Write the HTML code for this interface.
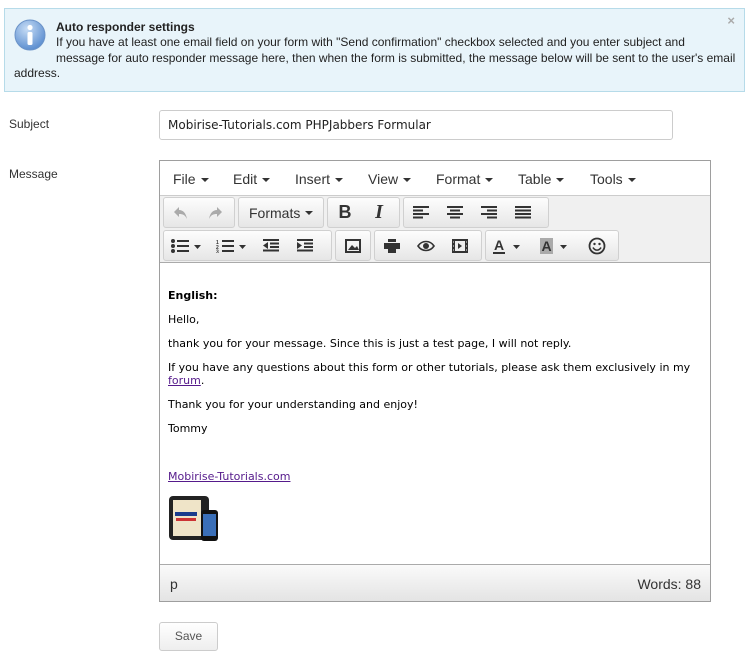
<!DOCTYPE html>
<html><head><meta charset="utf-8"><style>
*{box-sizing:border-box;margin:0;padding:0}
body{width:750px;height:655px;background:#fff;font-family:"Liberation Sans",Arial,sans-serif;color:#333;position:relative;overflow:hidden}
.info{position:absolute;left:4px;top:8px;width:741px;height:84px;background:#e8f4fa;border:1px solid #b6dbe9;font-size:12px;color:#222;line-height:15.5px}
.info .t{position:absolute;left:51px;top:11px;font-weight:bold}
.info .b{position:absolute;left:9px;top:26px;right:2px;white-space:nowrap}
.x{position:absolute;right:9px;top:4px;color:#aaa;font-size:13px;font-weight:bold}
.lbl{position:absolute;left:9px;font-size:12px;color:#333}
.inp{position:absolute;left:159px;top:110px;width:514px;height:30px;border:1px solid #ccc;border-radius:3px;font-family:"DejaVu Sans",sans-serif;font-size:12px;padding:7px 8px;color:#222}
.ed{position:absolute;left:159px;top:160px;width:552px;height:442px;border:1px solid #9e9e9e}
.menu{height:35px;background:#fff;border-bottom:1px solid #ccc;font-size:14px;color:#333}
.menu span{position:absolute;top:10px}
.car{display:inline-block;width:0;height:0;border-left:4px solid transparent;border-right:4px solid transparent;border-top:4px solid #333;vertical-align:middle;margin-left:5px}
.tb{position:absolute;left:0;width:550px;height:33px;background:#f0f0f0}
.g{position:absolute;top:1px;height:31px;border:1px solid #d0d0d0;border-radius:3px;background:linear-gradient(#fdfdfd,#e6e6e6);display:flex;align-items:center}
.ico{width:34px;height:29px;display:flex;align-items:center;justify-content:center;font-size:16px;color:#333;font-weight:bold}
.ct{position:absolute;left:0;top:101px;width:550px;height:302px;background:#fff;border-top:1px solid #aaa;font-family:"DejaVu Sans",Verdana,sans-serif;font-size:11px;color:#000;padding:26px 8px 0;line-height:13px}
.ct p{margin-bottom:11px}
.ct a{color:#551a8b;text-decoration:underline}
.st{position:absolute;left:0;top:403px;width:550px;height:37px;border-top:1px solid #aaa;background:linear-gradient(#fafafa,#e4e4e4);font-size:14px;color:#333}
.save{position:absolute;left:159px;top:622px;width:59px;height:29px;border:1px solid #ccc;border-radius:3px;background:linear-gradient(#fff,#eee);font-size:12px;color:#555;text-align:center;line-height:27px}
</style></head><body>
<div class="info">
<svg style="position:absolute;left:9px;top:10px" width="32" height="32" viewBox="0 0 32 32"><defs><radialGradient id="r" cx="40%" cy="30%" r="70%"><stop offset="0" stop-color="#c6dcf5"/><stop offset="1" stop-color="#5d8fd0"/></radialGradient></defs><circle cx="16" cy="16" r="15" fill="url(#r)" stroke="#6b93c8"/><circle cx="16" cy="8.5" r="2.6" fill="#fff"/><rect x="13.5" y="13" width="5" height="13" rx="1.5" fill="#fff"/></svg>
<div class="t">Auto responder settings</div>
<div class="b"><span style="padding-left:42px">If you have at least one email field on your form with "Send confirmation" checkbox selected and you enter subject and</span><br><span style="padding-left:42px">message for auto responder message here, then when the form is submitted, the message below will be sent to the user's email</span><br>address.</div>
<div class="x">×</div>
</div>
<div class="lbl" style="top:117px">Subject</div>
<div class="inp">Mobirise-Tutorials.com PHPJabbers Formular</div>
<div class="lbl" style="top:167px">Message</div>
<div class="ed">
<div class="menu">
<span style="left:13px">File<i class="car"></i></span>
<span style="left:73px">Edit<i class="car"></i></span>
<span style="left:135px">Insert<i class="car"></i></span>
<span style="left:208px">View<i class="car"></i></span>
<span style="left:276px">Format<i class="car"></i></span>
<span style="left:358px">Table<i class="car"></i></span>
<span style="left:430px">Tools<i class="car"></i></span>
</div>
<div class="tb" style="top:35px">
<div class="g" style="left:3px;width:72px">
<div class="ico"><svg width="16" height="14"><path d="M6 1 L1 6 L6 11 V8 C10 8 12 9 14 13 C13 7 10 4 6 4Z" fill="#aaa"/></svg></div>
<div class="ico"><svg width="16" height="14"><path d="M10 1 L15 6 L10 11 V8 C6 8 4 9 2 13 C3 7 6 4 10 4Z" fill="#aaa"/></svg></div></div>
<div class="g" style="left:78px;width:86px;font-size:14px;padding-left:10px">Formats<i class="car"></i></div>
<div class="g" style="left:167px;width:73px"><div class="ico" style="font-size:18px">B</div><div class="ico" style="font-style:italic;font-family:'Liberation Serif',serif;font-size:20px">I</div></div>
<div class="g" style="left:243px;width:146px">
<div class="ico"><svg width="16" height="14"><path d="M0 1h16M0 4.5h10M0 8h16M0 11.5h10" stroke="#333" stroke-width="2"/></svg></div>
<div class="ico"><svg width="16" height="14"><path d="M0 1h16M3 4.5h10M0 8h16M3 11.5h10" stroke="#333" stroke-width="2"/></svg></div>
<div class="ico"><svg width="16" height="14"><path d="M0 1h16M6 4.5h10M0 8h16M6 11.5h10" stroke="#333" stroke-width="2"/></svg></div>
<div class="ico"><svg width="16" height="14"><path d="M0 1h16M0 4.5h16M0 8h16M0 11.5h16" stroke="#333" stroke-width="2"/></svg></div></div>
</div>
<div class="tb" style="top:68px">
<div class="g" style="left:3px;width:169px">
<div class="ico" style="width:44px"><svg width="30" height="14"><circle cx="2" cy="2" r="2" fill="#333"/><circle cx="2" cy="7" r="2" fill="#333"/><circle cx="2" cy="12" r="2" fill="#333"/><path d="M6 2h12M6 7h12M6 12h12" stroke="#333" stroke-width="2"/><path d="M23 6h7l-3.5 4z" fill="#333"/></svg></div>
<div class="ico" style="width:46px"><svg width="30" height="14"><text x="0" y="5" font-size="5" fill="#333">1</text><text x="0" y="10" font-size="5" fill="#333">2</text><text x="0" y="14.5" font-size="5" fill="#333">3</text><path d="M6 2h12M6 7h12M6 12h12" stroke="#333" stroke-width="2"/><path d="M23 6h7l-3.5 4z" fill="#333"/></svg></div>
<div class="ico"><svg width="16" height="14"><path d="M0 1h16M7 4.5h9M7 8h9M0 11.5h16" stroke="#333" stroke-width="2"/><path d="M5 3v7L0 6.5z" fill="#333"/></svg></div>
<div class="ico"><svg width="16" height="14"><path d="M0 1h16M7 4.5h9M7 8h9M0 11.5h16" stroke="#333" stroke-width="2"/><path d="M0 3v7L5 6.5z" fill="#333"/></svg></div></div>
<div class="g" style="left:175px;width:36px"><div class="ico"><svg width="16" height="14"><rect x="1" y="1" width="14" height="12" fill="none" stroke="#333" stroke-width="2"/><path d="M3 11l4-5 3 3 2-2 2 4z" fill="#333"/></svg></div></div>
<div class="g" style="left:214px;width:108px">
<div class="ico"><svg width="16" height="14"><rect x="4" y="0" width="8" height="3" fill="#333"/><rect x="0" y="4" width="16" height="6" fill="#333"/><rect x="4" y="8" width="8" height="6" fill="#333"/></svg></div>
<div class="ico"><svg width="18" height="12"><path d="M1 6C5 0 13 0 17 6C13 12 5 12 1 6Z" fill="none" stroke="#333" stroke-width="1.6"/><circle cx="9" cy="6" r="3" fill="#333"/></svg></div>
<div class="ico"><svg width="16" height="14"><rect x="0" y="0" width="16" height="14" fill="#333"/><rect x="3" y="2" width="10" height="10" fill="#eee"/><path d="M6 4v6l4-3z" fill="#333"/><path d="M1 3h1M1 7h1M1 11h1M14 3h1M14 7h1M14 11h1" stroke="#eee"/></svg></div></div>
<div class="g" style="left:325px;width:134px">
<div class="ico" style="width:44px"><svg width="30" height="16"><text x="1" y="12" font-size="14" font-weight="bold" font-family="Liberation Sans" fill="#333">A</text><rect x="0" y="14" width="12" height="2" fill="#333"/><path d="M20 7h7l-3.5 4z" fill="#333"/></svg></div>
<div class="ico" style="width:50px"><svg width="30" height="16"><rect x="0" y="0" width="13" height="16" fill="#aaa"/><text x="1.5" y="13" font-size="14" font-weight="bold" font-family="Liberation Sans" fill="#333">A</text><path d="M20 7h7l-3.5 4z" fill="#333"/></svg></div>
<div class="ico"><svg width="18" height="18"><circle cx="9" cy="9" r="7.5" fill="none" stroke="#333" stroke-width="1.8"/><circle cx="6.5" cy="7" r="1.2" fill="#333"/><circle cx="11.5" cy="7" r="1.2" fill="#333"/><path d="M5 10.5C7 14 11 14 13 10.5" fill="none" stroke="#333" stroke-width="1.6"/></svg></div></div>
</div>
<div class="ct">
<p><b>English:</b></p>
<p>Hello,</p>
<p>thank you for your message. Since this is just a test page, I will not reply.</p>
<p>If you have any questions about this form or other tutorials, please ask them exclusively in my <a>forum</a>.</p>
<p>Thank you for your understanding and enjoy!</p>
<p>Tommy</p>
<p>&nbsp;</p>
<p><a>Mobirise-Tutorials.com</a></p>
<svg width="52" height="50" viewBox="0 0 52 50"><rect x="1" y="2" width="40" height="44" rx="4" fill="#222"/><rect x="5" y="6" width="28" height="36" fill="#efe4c8"/><rect x="7" y="18" width="22" height="4" fill="#1a3c8c"/><rect x="8" y="24" width="20" height="3" fill="#c33"/><rect x="33" y="16" width="17" height="31" rx="3" fill="#111"/><rect x="35" y="20" width="13" height="22" fill="#3a6fb8"/></svg>
</div>
<div class="st"><span style="position:absolute;left:10px;top:11px">p</span><span style="position:absolute;right:9px;top:11px">Words: 88</span></div>
</div>
<div class="save">Save</div>
</body></html>
